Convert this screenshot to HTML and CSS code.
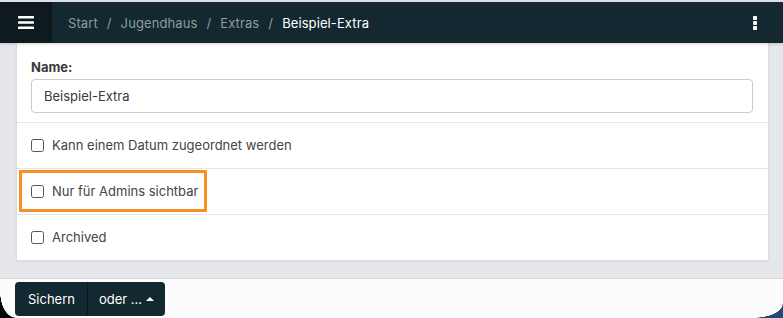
FILE: index.html
```html
<!DOCTYPE html>
<html lang="de">
<head>
<meta charset="utf-8">
<title>Beispiel-Extra</title>
<link rel="stylesheet" href="styles.css">
</head>
<body>
<header class="nav">
  <button class="menu-btn" aria-label="Menü">
    <svg width="16" height="13" viewBox="0 0 16 13"><rect x="0" y="0" width="16" height="2.4" rx="0.6" fill="#fff"/><rect x="0" y="5.3" width="16" height="2.4" rx="0.6" fill="#fff"/><rect x="0" y="10.6" width="16" height="2.4" rx="0.6" fill="#fff"/></svg>
  </button>
  <nav class="breadcrumb">
    <span class="crumb">Start</span><span class="sep">/</span>
    <span class="crumb">Jugendhaus</span><span class="sep">/</span>
    <span class="crumb">Extras</span><span class="sep">/</span>
    <span class="crumb current">Beispiel-Extra</span>
  </nav>
  <div class="kebab" aria-label="Mehr">
    <svg width="4" height="14" viewBox="0 0 4 14"><rect x="0" y="0" width="4" height="4" rx="0.8" fill="#fff"/><rect x="0" y="5" width="4" height="4" rx="0.8" fill="#fff"/><rect x="0" y="10" width="4" height="4" rx="0.8" fill="#fff"/></svg>
  </div>
</header>
<main class="content">
  <section class="card">
    <div class="field">
      <label class="field-label" for="name">Name:</label>
      <input id="name" class="text-input" type="text" value="Beispiel-Extra">
    </div>
    <div class="row">
      <label class="check"><input type="checkbox"><span>Kann einem Datum zugeordnet werden</span></label>
    </div>
    <div class="row">
      <label class="check highlight"><input type="checkbox"><span>Nur für Admins sichtbar</span></label>
    </div>
    <div class="row">
      <label class="check"><input type="checkbox"><span>Archived</span></label>
    </div>
  </section>
</main>
<footer class="footer">
  <div class="btn-group">
    <button class="btn">Sichern</button>
    <button class="btn btn-more">oder ... <span class="caret"></span></button>
  </div>
</footer>
<div class="corner corner-bl"></div>
<div class="corner corner-br"></div>
</body>
</html>
```
FILE: styles.css
```css
* { box-sizing: border-box; }
html, body { height: 100%; }
body {
  margin: 0;
  background: #e6e7ea;
  font-family: Inter, "Noto Sans", "Liberation Sans", sans-serif;
  font-size: 13px;
  color: #3a3a3a;
  overflow: hidden;
  position: relative;
  display: flex;
  flex-direction: column;
}
.nav {
  display: flex;
  align-items: stretch;
  height: 43px;
  border-top: 2px solid #dfe2e5;
  background: #132830;
  box-shadow: 0 1px 3px rgba(0,0,0,0.18);
  position: relative;
  z-index: 1;
  flex-shrink: 0;
}
.menu-btn {
  width: 52px;
  border: 0;
  padding: 0;
  background: #0e1a1e;
  display: flex;
  align-items: center;
  justify-content: center;
}
.breadcrumb {
  display: flex;
  align-items: center;
  padding-left: 16px;
  color: #8e9ca2;
  font-size: 13px;
  letter-spacing: 0.1px;
}
.crumb { color: #8e9ca2; }
.crumb.current { color: #ffffff; }
.sep { color: #8e9ca2; padding: 0 9px; }
.kebab {
  margin-left: auto;
  margin-right: 26px;
  display: flex;
  align-items: center;
}
.content {
  flex: 1;
  padding: 0 14px 17px 16px;
}
.card {
  background: #fff;
  border: 1px solid #dcdcdc;
  border-top: 0;
  box-shadow: 0 1px 2px rgba(0,0,0,0.06);
}
.field {
  padding: 15px 15px 9px 14px;
  border-bottom: 1px solid #e7e7e7;
}
.field-label {
  display: block;
  font-weight: 700;
  color: #3a3a3a;
  line-height: 18px;
  margin-bottom: 3px;
}
.text-input {
  display: block;
  width: 100%;
  height: 34px;
  border: 1px solid #cccccc;
  border-radius: 4px;
  padding: 0 12px;
  font-family: inherit;
  font-size: 13px;
  color: #3a3a3a;
  background: #fff;
}
.row {
  height: 46px;
  display: flex;
  align-items: center;
  padding: 0 14px 1px;
  border-bottom: 1px solid #e7e7e7;
}
.row:last-child { border-bottom: 0; height: 45px; }
.check {
  display: flex;
  align-items: center;
  gap: 8px;
  color: #444;
  position: relative;
}
.check input {
  appearance: none;
  -webkit-appearance: none;
  width: 13px;
  height: 13px;
  margin: 0;
  border: 1px solid #555;
  border-radius: 2.5px;
  background: #fff;
}
.highlight::after {
  content: "";
  position: absolute;
  left: -12px;
  right: -9px;
  top: -13px;
  bottom: -13px;
  border: 3px solid #f8901f;
  border-radius: 1px;
}
.footer {
  height: 40px;
  flex-shrink: 0;
  background: #fcfcfc;
  border-top: 1px solid #d8d8d8;
  padding: 3px 0 0 15px;
}
.btn-group {
  display: inline-flex;
  height: 34px;
  background: #132830;
  border-radius: 4px;
  position: relative;
  z-index: 2;
}
.btn {
  border: 0;
  background: transparent;
  color: #fff;
  font-family: inherit;
  font-size: 13px;
  padding: 0 12px 0 13px;
  display: flex;
  align-items: center;
}
.btn-more {
  border-left: 1px solid #0b1a1f;
  padding: 0 11px 0 11px;
}
.caret {
  display: inline-block;
  width: 0;
  height: 0;
  margin-left: 4px;
  margin-top: -1px;
  border-left: 4px solid transparent;
  border-right: 4px solid transparent;
  border-bottom: 4px solid #fff;
}
.corner {
  position: absolute;
  bottom: 0;
  overflow: hidden;
  z-index: 1;
}
.corner-bl {
  left: 0;
  width: 16px;
  height: 26px;
  background: radial-gradient(ellipse 16px 26px at 100% 0, transparent 98%, #050808 100%);
}
.corner-br {
  right: 0;
  width: 30px;
  height: 14px;
  background: radial-gradient(ellipse 30px 14px at 0 0, transparent 97%, #1f4a72 100%);
  z-index: 3;
}
```
